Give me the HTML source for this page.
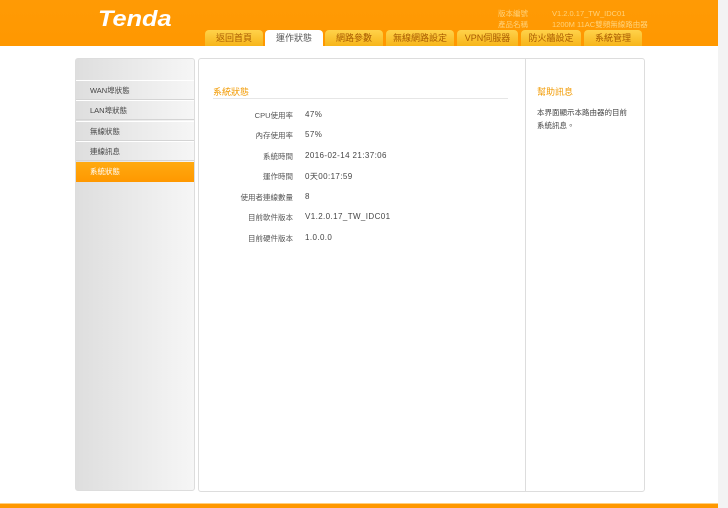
<!DOCTYPE html>
<html><head><meta charset="utf-8"><style>
*{margin:0;padding:0;box-sizing:border-box}
body{width:728px;height:508px;overflow:hidden;background:#fff;font-family:"Liberation Sans","Noto Sans CJK TC",sans-serif;font-size:8px;color:#333;position:relative}
.hdr{position:absolute;left:0;top:0;width:718px;height:46px;background:linear-gradient(#ff9a05,#ff9800)}
.logo{position:absolute;left:98px;top:6px;color:#fff;font-size:22px;font-weight:bold;font-style:italic;letter-spacing:0px;transform:scaleX(1.15);transform-origin:left}
.ver{position:absolute;left:498px;top:8px;color:#ffd27a;font-size:7.5px;line-height:11px}
.ver2{position:absolute;left:552px;top:8px;color:#ffd27a;font-size:7.5px;line-height:11px}
.tab{position:absolute;top:30px;height:16px;background:linear-gradient(#ffd24a,#f7b51a);border-radius:4px 4px 0 0;color:#a85a00;font-size:9px;text-align:center;line-height:17px}
.tab.on{background:#fff;color:#555}
.side{position:absolute;left:75px;top:58px;width:120px;height:433px;border:1px solid #ddd;border-radius:3px;background:linear-gradient(90deg,#dedede,#f6f6f6)}
.it{position:absolute;left:0;width:118px;height:20px;border-top:1px solid #fff;border-bottom:1px solid #d4d4d4;padding-left:14px;line-height:20px;font-size:7.5px;color:#444}
.it.on{background:linear-gradient(#ffaa10,#ff9800);color:#fff;border:none}
.main{position:absolute;left:198px;top:58px;width:447px;height:434px;border:1px solid #ddd;border-radius:3px;background:#fff}
.div{position:absolute;left:525px;top:58px;width:1px;height:434px;background:#ddd}
.t{position:absolute;color:#f29a00;font-size:9px}
.hr{position:absolute;left:213px;top:98px;width:295px;height:1px;background:#e6e6e6}
.l{position:absolute;width:90px;left:203px;text-align:right;font-size:7.5px;color:#555}
.v{position:absolute;left:305px;font-size:8px;letter-spacing:0.4px;color:#444}
.foot{position:absolute;left:0;top:503px;width:718px;height:5px;background:#ff9800;border-top:1px solid #ffd080}
.sb{position:absolute;left:718px;top:0;width:10px;height:508px;background:#f3f3f3}
</style></head><body>
<div class="hdr"></div>
<div class="logo">Tenda</div>
<div class="ver">版本編號<br>產品名稱</div>
<div class="ver2">V1.2.0.17_TW_IDC01<br>1200M 11AC雙頻無線路由器</div>
<div class="tab" style="left:205px;width:58px">返回首頁</div>
<div class="tab on" style="left:265px;width:58px">運作狀態</div>
<div class="tab" style="left:325px;width:58px">網路參數</div>
<div class="tab" style="left:386px;width:68px">無線網路設定</div>
<div class="tab" style="left:457px;width:61px">VPN伺服器</div>
<div class="tab" style="left:521px;width:60px">防火牆設定</div>
<div class="tab" style="left:584px;width:58px">系統管理</div>
<div class="side">
<div class="it" style="top:21px">WAN埠狀態</div>
<div class="it" style="top:41px">LAN埠狀態</div>
<div class="it" style="top:62px">無線狀態</div>
<div class="it" style="top:82px">連線訊息</div>
<div class="it on" style="top:103px">系統狀態</div>
</div>
<div class="main"></div>
<div class="div"></div>
<div class="t" style="left:213px;top:85px">系統狀態</div>
<div class="hr"></div>
<div class="t" style="left:537px;top:85px">幫助訊息</div>
<div style="position:absolute;left:537px;top:106px;width:95px;font-size:7.5px;line-height:13px;color:#444">本界面顯示本路由器的目前系統訊息。</div>
<div class="l" style="top:110px">CPU使用率</div><div class="v" style="top:110px">47%</div>
<div class="l" style="top:130px">內存使用率</div><div class="v" style="top:130px">57%</div>
<div class="l" style="top:151px">系統時間</div><div class="v" style="top:151px">2016-02-14 21:37:06</div>
<div class="l" style="top:171px">運作時間</div><div class="v" style="top:171px">0天00:17:59</div>
<div class="l" style="top:192px">使用者連線數量</div><div class="v" style="top:192px">8</div>
<div class="l" style="top:212px">目前軟件版本</div><div class="v" style="top:212px">V1.2.0.17_TW_IDC01</div>
<div class="l" style="top:233px">目前硬件版本</div><div class="v" style="top:233px">1.0.0.0</div>
<div class="foot"></div>
<div class="sb"></div>
</body></html>
